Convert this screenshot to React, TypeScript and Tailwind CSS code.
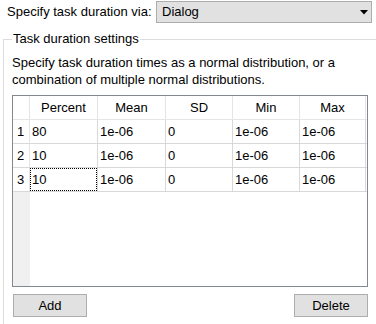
import React from 'react';

const columns = [
  { name: 'Percent', w: 'w-[68px]' },
  { name: 'Mean', w: 'w-[68px]' },
  { name: 'SD', w: 'w-[67px]' },
  { name: 'Min', w: 'w-[67px]' },
  { name: 'Max', w: 'w-[66px]' },
];

const rows = [
  ['80', '1e-06', '0', '1e-06', '1e-06'],
  ['10', '1e-06', '0', '1e-06', '1e-06'],
  ['10', '1e-06', '0', '1e-06', '1e-06'],
];

export default function App() {
  return (
    <div className="w-[376px] h-[324px] overflow-hidden bg-white text-[13px] text-black font-['Liberation_Sans',Arial,sans-serif]">
      {/* Source selector */}
      <div className="flex items-center pt-[1px] pl-[7px] h-[23px]">
        <span className="w-[149px] whitespace-nowrap">Specify task duration via:</span>
        <div className="flex items-center justify-between w-[216px] h-[22px] bg-[#e1e1e1] border border-[#adadad] pl-[5px] pr-[3px]">
          <span>Dialog</span>
          <svg width="8" height="5" viewBox="0 0 8 5">
            <path d="M0 0h8L4 4.5z" fill="#000" />
          </svg>
        </div>
      </div>

      {/* Settings group */}
      <fieldset className="mt-[8px] ml-[3px] w-[420px] border-t border-l border-[#dcdcdc] pb-4">
        <legend className="ml-[8px] px-[1px] leading-[16px]">Task duration settings</legend>

        <p className="ml-[8px] mt-[7px] w-[345px] leading-[17px]">
          Specify task duration times as a normal distribution, or a combination of multiple normal distributions.
        </p>

        <div className="ml-[8px] mt-[7px] w-[356px] h-[192px] border border-[#828790] bg-white flex">
          <div className="flex flex-col w-[354px]">
            {/* Header */}
            <div className="flex h-[24px] border-b border-[#e5e5e5]">
              <div className="w-[17px] border-r border-[#e5e5e5]" />
              {columns.map((c) => (
                <div key={c.name} className={`${c.w} flex items-center justify-center border-r border-[#e5e5e5]`}>
                  {c.name}
                </div>
              ))}
            </div>

            {rows.map((r, i) => (
              <div key={i} className="flex h-[24px] border-b border-[#d8d8d8]">
                <div className="w-[17px] flex items-center pl-[4px] border-r border-[#e5e5e5]">{i + 1}</div>
                {r.map((v, j) => (
                  <div key={j} className={`${columns[j].w} flex items-center border-r border-[#d8d8d8]`}>
                    {i === 2 && j === 0 ? (
                      <div className="w-full h-full flex items-center pl-[1px] border border-dotted border-black">{v}</div>
                    ) : (
                      <span className="pl-[2px]">{v}</span>
                    )}
                  </div>
                ))}
              </div>
            ))}

            <div className="flex flex-1">
              <div className="w-[17px] bg-[#f0f0f0]" />
            </div>
          </div>
        </div>

        <div className="flex justify-between w-[356px] ml-[9px] mt-[7px]">
          <button className="w-[74px] h-[23px] bg-[#e1e1e1] border border-[#adadad]">Add</button>
          <button className="w-[74px] h-[23px] bg-[#e1e1e1] border border-[#adadad] mr-[1px]">Delete</button>
        </div>
      </fieldset>
    </div>
  );
}
